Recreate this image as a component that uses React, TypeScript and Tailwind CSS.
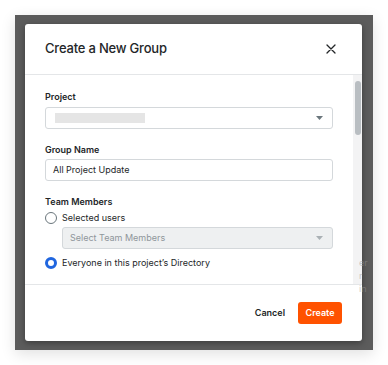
import React from "react";

function Caret({ className = "" }: { className?: string }) {
  return (
    <svg width="7" height="4" viewBox="0 0 7 4" className={className}>
      <path d="M0 0h7L3.5 4z" fill="currentColor" />
    </svg>
  );
}

function Radio({ checked }: { checked?: boolean }) {
  return (
    <span
      className={
        checked
          ? "h-3 w-3 shrink-0 rounded-full border-[3.5px] border-[#2066df] bg-white"
          : "h-3 w-3 shrink-0 rounded-full border-[1.5px] border-[#6a767c] bg-white"
      }
    />
  );
}

export default function App() {
  return (
    <div className="h-[365px] w-[388px] bg-white p-[15px] font-['Inter',sans-serif] text-[#232628]">
      <div className="relative h-[335px] bg-[#5c5c5c] pb-[9px] pl-[10px] pr-[11px] pt-[9px] shadow-[0_4px_14px_rgba(0,0,0,0.12)]">
        <div className="flex h-full flex-col rounded-[3px] bg-white shadow-[0_2px_6px_rgba(0,0,0,0.35)]">
          <div className="flex h-[51px] shrink-0 items-center justify-between border-b border-[#e4e6e8] pl-5 pr-[26px]">
            <h2 className="text-[13px] font-medium tracking-[-0.2px]">Create a New Group</h2>
            <svg width="10" height="10" viewBox="0 0 10 10">
              <path d="M1 1l8 8M9 1l-8 8" stroke="#232628" strokeWidth="1.3" strokeLinecap="round" />
            </svg>
          </div>

          <div className="flex min-h-0 flex-1">
            <div className="flex-1 overflow-hidden px-5 pt-[15px]">
              <label className="block text-[9px] font-semibold leading-[14px]">Project</label>
              <div className="mt-[2.5px] flex h-[22px] items-center justify-between rounded-[3px] border border-[#d4d8db] pl-[9px] pr-[9px]">
                <span className="h-[10px] w-[90px] bg-[#e5e5e5]" />
                <Caret className="text-[#6a767c]" />
              </div>

              <label className="mt-[14.5px] block text-[9px] font-semibold leading-[14px]">Group Name</label>
              <div className="mt-[2px] flex h-[22px] items-center rounded-[3px] border border-[#d4d8db] px-[7px] text-[9px]">
                All Project Update
              </div>

              <label className="mt-[14px] block text-[9px] font-semibold leading-[14px]">Team Members</label>
              <div className="mt-[2px] flex h-[14px] items-center gap-[5px] text-[9px]">
                <Radio />
                <span>Selected users</span>
              </div>
              <div className="ml-[17px] mt-[1.5px] flex h-[22.5px] items-center justify-between rounded-[3px] border border-[#d4d8db] bg-[#eef0f1] pl-[7px] pr-[9px] text-[9px] text-[#8e969b]">
                <span>Select Team Members</span>
                <Caret className="text-[#aab1b5]" />
              </div>
              <div className="mt-[7px] flex h-[14px] items-center gap-[5px] text-[9px]">
                <Radio checked />
                <span>Everyone in this project’s Directory</span>
              </div>
            </div>
            <div className="w-[9.5px] shrink-0 bg-[#f3f3f4] pr-[1px] pt-[6px]">
              <div className="ml-auto h-[54px] w-[6.5px] rounded-full bg-[#b9bec2]" />
            </div>
          </div>

          <div className="flex h-[57px] shrink-0 items-center justify-end gap-[13px] border-t border-[#e4e6e8] pr-[20px]">
            <button type="button" className="text-[9px] font-semibold">
              Cancel
            </button>
            <button
              type="button"
              className="h-[22px] w-[44px] rounded-[3px] bg-[#ff5200] text-[9px] font-semibold text-white"
            >
              Create
            </button>
          </div>
        </div>
        <div className="pointer-events-none absolute left-[344px] top-[241px] text-[9px] leading-[13px] text-[#9a9a9a] opacity-50">
          <div>er r</div>
          <div>in</div>
        </div>
      </div>
    </div>
  );
}
